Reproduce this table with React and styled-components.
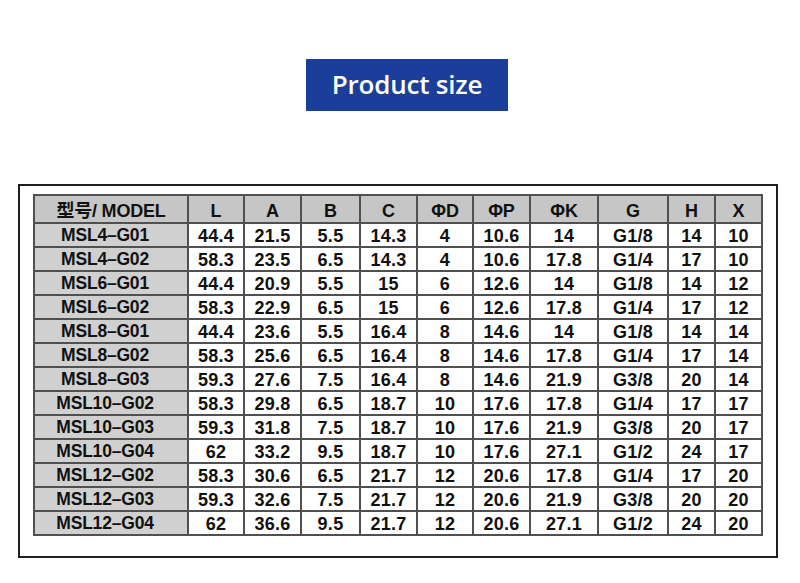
import React from "react";
import styled, { createGlobalStyle } from "styled-components";

const Global = createGlobalStyle`
  html, body { margin: 0; padding: 0; background: #ffffff; }
  body { width: 800px; height: 583px; overflow: hidden; }
`;

const Page = styled.div`
  display: flex;
  flex-direction: column;
  align-items: flex-start;
  padding-top: 59px;
  width: 800px;
`;

const TitleRow = styled.div`
  display: flex;
  justify-content: center;
  width: 100%;
  padding-left: 14px;
  box-sizing: border-box;
`;

const Badge = styled.div`
  width: 202px;
  height: 52px;
  background: #1c3e9b;
  color: #ffffff;
  display: flex;
  align-items: center;
  justify-content: center;
  font-family: "Open Sans", "Noto Sans", sans-serif;
  font-weight: 600;
  font-size: 26px;
  letter-spacing: -0.2px;
  padding-bottom: 2px;
  box-sizing: border-box;
`;

const Frame = styled.div`
  margin: 73px 0 0 18px;
  width: 760px;
  height: 374px;
  box-sizing: border-box;
  border: 2px solid #1e1e1e;
  padding: 8px 13px 20px 13px;
  background: #ffffff;
`;

const Grid = styled.div`
  display: grid;
  grid-template-columns: 152px 54px 55px 57px 55px 54px 55px 66px 68px 45px 45px;
  grid-template-rows: 26px repeat(13, 22px);
  gap: 2px;
  padding: 2px;
  background: #505050;
  width: 730px;
  box-sizing: border-box;
`;

const Cell = styled.div`
  display: flex;
  align-items: center;
  justify-content: center;
  background: ${(p) => (p.$head ? "#c6c6c6" : p.$model ? "#d0d0d0" : "#ffffff")};
  font-family: "Liberation Sans", Arial, "Noto Sans CJK SC", sans-serif;
  font-weight: bold;
  font-size: ${(p) => (p.$model ? "17.5px" : "18px")};
  letter-spacing: ${(p) => (p.$model || p.$head ? "-0.2px" : "0.3px")};
  color: #111111;
  padding-top: ${(p) => (p.$head ? "3px" : "2px")};
  padding-right: ${(p) => (p.$model ? "12px" : "0")};
  box-sizing: border-box;
  white-space: nowrap;
  line-height: 1;
`;

const headers = ["型号/ MODEL", "L", "A", "B", "C", "ΦD", "ΦP", "ΦK", "G", "H", "X"];

const rows = [
  ["MSL4–G01", "44.4", "21.5", "5.5", "14.3", "4", "10.6", "14", "G1/8", "14", "10"],
  ["MSL4–G02", "58.3", "23.5", "6.5", "14.3", "4", "10.6", "17.8", "G1/4", "17", "10"],
  ["MSL6–G01", "44.4", "20.9", "5.5", "15", "6", "12.6", "14", "G1/8", "14", "12"],
  ["MSL6–G02", "58.3", "22.9", "6.5", "15", "6", "12.6", "17.8", "G1/4", "17", "12"],
  ["MSL8–G01", "44.4", "23.6", "5.5", "16.4", "8", "14.6", "14", "G1/8", "14", "14"],
  ["MSL8–G02", "58.3", "25.6", "6.5", "16.4", "8", "14.6", "17.8", "G1/4", "17", "14"],
  ["MSL8–G03", "59.3", "27.6", "7.5", "16.4", "8", "14.6", "21.9", "G3/8", "20", "14"],
  ["MSL10–G02", "58.3", "29.8", "6.5", "18.7", "10", "17.6", "17.8", "G1/4", "17", "17"],
  ["MSL10–G03", "59.3", "31.8", "7.5", "18.7", "10", "17.6", "21.9", "G3/8", "20", "17"],
  ["MSL10–G04", "62", "33.2", "9.5", "18.7", "10", "17.6", "27.1", "G1/2", "24", "17"],
  ["MSL12–G02", "58.3", "30.6", "6.5", "21.7", "12", "20.6", "17.8", "G1/4", "17", "20"],
  ["MSL12–G03", "59.3", "32.6", "7.5", "21.7", "12", "20.6", "21.9", "G3/8", "20", "20"],
  ["MSL12–G04", "62", "36.6", "9.5", "21.7", "12", "20.6", "27.1", "G1/2", "24", "20"],
];

export default function App() {
  return (
    <>
      <Global />
      <Page>
        <TitleRow>
          <Badge>Product size</Badge>
        </TitleRow>
        <Frame>
          <Grid>
            {headers.map((h, i) => (
              <Cell key={"h" + i} $head>
                {h}
              </Cell>
            ))}
            {rows.map((r, ri) =>
              r.map((v, ci) => (
                <Cell key={ri + "-" + ci} $model={ci === 0}>
                  {v}
                </Cell>
              ))
            )}
          </Grid>
        </Frame>
      </Page>
    </>
  );
}
